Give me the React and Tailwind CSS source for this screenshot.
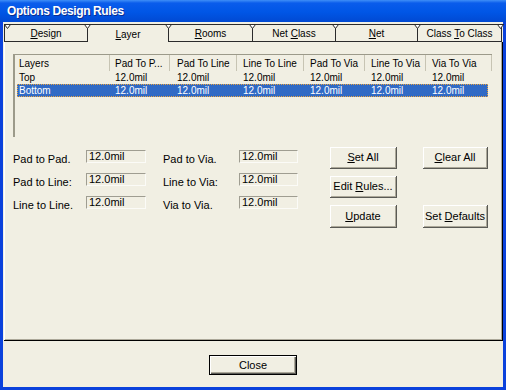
import React from 'react';

const TABS = [
  { key: 'design', w: 'w-[84px]', label: <><u>D</u>esign</> },
  { key: 'layer', w: 'w-[81px]', label: <><u>L</u>ayer</>, selected: true },
  { key: 'rooms', w: 'w-[84px]', label: <><u>R</u>ooms</> },
  { key: 'netclass', w: 'w-[83px]', label: <>Net <u>C</u>lass</> },
  { key: 'net', w: 'w-[82px]', label: <><u>N</u>et</> },
  { key: 'c2c', w: 'w-[84px]', label: <>Class <u>T</u>o Class</> },
];

const HEAD = [
  { w: 'w-[95px]', pad: 'pl-[4px]', text: 'Layers' },
  { w: 'w-[60px]', pad: 'pl-[5px]', text: 'Pad To P...' },
  { w: 'w-[67px]', pad: 'pl-[7px]', text: 'Pad To Line' },
  { w: 'w-[67px]', pad: 'pl-[6px]', text: 'Line To Line' },
  { w: 'w-[61px]', pad: 'pl-[6px]', text: 'Pad To Via' },
  { w: 'w-[61px]', pad: 'pl-[6px]', text: 'Line To Via' },
  { w: 'w-[66px]', pad: 'pl-[6px]', text: 'Via To Via' },
];

const ROW_COLS = [
  { w: 'w-[93px]', pad: 'pl-[2px]' },
  { w: 'w-[60px]', pad: 'pl-[5px]' },
  { w: 'w-[67px]', pad: 'pl-[7px]' },
  { w: 'w-[67px]', pad: 'pl-[6px]' },
  { w: 'w-[61px]', pad: 'pl-[6px]' },
  { w: 'w-[61px]', pad: 'pl-[6px]' },
  { w: 'w-[62px]', pad: 'pl-[6px]' },
];

const ROWS = [
  { name: 'Top', vals: Array(6).fill('12.0mil') },
  { name: 'Bottom', vals: Array(6).fill('12.0mil'), selected: true },
];

const FIELDS = [
  ['Pad to Pad.', 'Pad to Via.'],
  ['Pad to Line:', 'Line to Via:'],
  ['Line to Line.', 'Via to Via.'],
];

function Notch({ className }) {
  return (
    <svg className={`absolute -top-[1px] ${className}`} width="7" height="5" viewBox="0 0 7 5">
      <path d="M0 0.5 L7 0.5 M0.5 0.5 L3.5 4.5 L6.5 0.5" fill="#fff" stroke="#2b2b2b" strokeWidth="1" />
    </svg>
  );
}

function Btn({ children, className = '' }) {
  return (
    <button className={`h-[22px] flex items-center justify-center bg-[#f1efe3] border-r border-b border-[#5a5a55] shadow-[inset_1px_1px_0_#ffffff,inset_-1px_-1px_0_#aca899] text-[11px] leading-none ${className}`}>
      <span>{children}</span>
    </button>
  );
}

function Field({ value }) {
  return (
    <div className="h-[13px] border-t border-l border-[#9f9d91] border-r border-b border-r-[#fbfbf7] border-b-[#fbfbf7] pl-[2px] text-[11px] leading-[10px] bg-[#f1efe3]">
      {value}
    </div>
  );
}

export default function App() {
  return (
    <div className="w-[506px] h-[390px] bg-[#0b42dc] flex flex-col font-['Liberation_Sans',Arial,sans-serif] text-black select-none">
      {/* title bar */}
      <div className="h-[22px] shrink-0 flex items-center pl-[7px] bg-[linear-gradient(180deg,#3f8ff7_0%,#0a5ceb_14%,#0056e6_55%,#0149d2_100%)]">
        <span className="text-white font-bold text-[12px] tracking-[-0.4px] [text-shadow:1px_1px_0_#0a2d90]">Options Design Rules</span>
      </div>

      <div className="flex-1 mx-[3px] mb-[3px] bg-[#f1efe3] flex flex-col">
        {/* tabs */}
        <div className="mt-[2px] ml-[1px] flex h-[18px] shrink-0">
          {TABS.map((t, i) => (
            <div
              key={t.key}
              className={`relative ${t.w} flex items-center justify-center border-t border-r border-[#2b2b2b] text-[10px] ${i === 0 ? 'border-l' : ''} ${t.selected ? '' : 'border-b'}`}
            >
              <Notch className={i === 0 ? '-left-[1px]' : '-left-[4px]'} />
              {i === TABS.length - 1 && <Notch className="-right-[3px]" />}
              <span className="pt-[1px]">{t.label}</span>
            </div>
          ))}
        </div>

        {/* tab page */}
        <div className="h-[299px] ml-[1px] w-[499px] shrink-0 border-r border-b border-black shadow-[inset_1px_0_0_#ffffff,inset_-1px_-1px_0_#aca899] pt-[12px] pl-[9px]">
          {/* list */}
          <div className="w-[479px] h-[83px] border-l-2 border-t border-[#9c9a8a]">
            <div className="flex h-[16px] text-[10px]">
              {HEAD.map((h) => (
                <div key={h.text} className={`${h.w} ${h.pad} border-r border-[#c7c4b3] flex items-center whitespace-nowrap overflow-hidden`}>
                  {h.text}
                </div>
              ))}
            </div>
            {ROWS.map((r) => (
              <div
                key={r.name}
                className={`ml-[2px] w-[471px] h-[13px] flex items-center text-[10px] ${r.selected ? 'bg-[#316ac5] text-white outline outline-1 outline-dotted outline-[#e9a441] -outline-offset-1' : ''}`}
              >
                {[r.name, ...r.vals].map((v, i) => (
                  <div key={i} className={`${ROW_COLS[i].w} ${ROW_COLS[i].pad} whitespace-nowrap`}>{v}</div>
                ))}
              </div>
            ))}
          </div>

          {/* fields and buttons */}
          <div className="flex mt-[10px]">
            <div className="w-[286px] flex flex-col gap-[10px] pt-[3px]">
              {FIELDS.map(([a, b]) => (
                <div key={a} className="flex items-start h-[13px]">
                  <div className="w-[73px] text-[11px] leading-[13px] mt-[3px]">{a}</div>
                  <div className="w-[60px]"><Field value="12.0mil" /></div>
                  <div className="w-[76px] ml-[17px] text-[11px] leading-[13px] mt-[3px]">{b}</div>
                  <div className="w-[59px]"><Field value="12.0mil" /></div>
                </div>
              ))}
            </div>
            <div className="ml-[31px] grid grid-cols-[67px_65px] gap-x-[26px] gap-y-[7px] auto-rows-[22px]">
              <Btn><u>S</u>et All</Btn>
              <Btn><u>C</u>lear All</Btn>
              <Btn>Edit <u>R</u>ules...</Btn>
              <div />
              <Btn className="h-[23px]"><u>U</u>pdate</Btn>
              <Btn className="h-[23px]">Set <u>D</u>efaults</Btn>
            </div>
          </div>
        </div>

        {/* footer */}
        <div className="flex-1 flex justify-center pt-[14px]">
          <button className="w-[88px] h-[20px] border border-black bg-[#f1efe3] shadow-[inset_1px_1px_0_#ffffff,inset_-1px_-1px_0_#5a5a55,inset_-2px_-2px_0_#aca899] text-[11px] leading-none flex items-center justify-center">
            <span>Close</span>
          </button>
        </div>
      </div>
    </div>
  );
}
